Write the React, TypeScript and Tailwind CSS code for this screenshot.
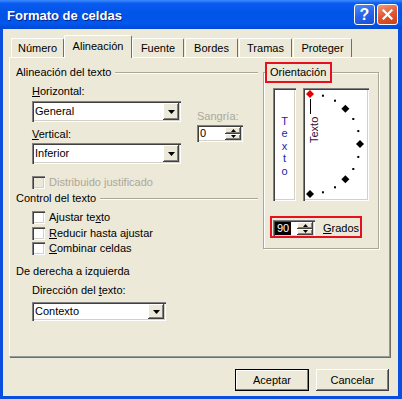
import React from "react";

const sunken =
  "shadow-[inset_1px_1px_0_#808080,inset_2px_2px_0_#404040,inset_-1px_-1px_0_#ffffff,inset_-2px_-2px_0_#d4d0c8]";
const raised =
  "shadow-[inset_-1px_-1px_0_#404040,inset_1px_1px_0_#ffffff,inset_-2px_-2px_0_#808080,inset_2px_2px_0_#ece9d8]";

function Arrow({ up, small }: { up?: boolean; small?: boolean }) {
  const w = small ? 5 : 7;
  const h = small ? 3 : 4;
  return (
    <svg width={w} height={h} viewBox={`0 0 ${w} ${h}`}>
      <polygon points={up ? `${w / 2},0 ${w},${h} 0,${h}` : `0,0 ${w},0 ${w / 2},${h}`} fill="#000" />
    </svg>
  );
}

function Select({ value, className }: { value: string; className: string }) {
  return (
    <div className={`flex bg-white p-[2px] ${sunken} ${className}`}>
      <span className="flex flex-1 items-center pl-[1px]">{value}</span>
      <div className={`flex w-[16px] items-center justify-center bg-[#ece9d8] ${raised}`}>
        <Arrow />
      </div>
    </div>
  );
}

function Spin({ className, children }: { className: string; children: React.ReactNode }) {
  return (
    <div className={`flex bg-white p-[2px] ${sunken} ${className}`}>
      <div className="flex flex-1 items-center">{children}</div>
      <div className="flex w-[16px] flex-col">
        <div className={`flex flex-1 items-center justify-center bg-[#ece9d8] ${raised}`}>
          <Arrow up small />
        </div>
        <div className={`flex flex-1 items-center justify-center bg-[#ece9d8] ${raised}`}>
          <Arrow small />
        </div>
      </div>
    </div>
  );
}

function Check({ children, disabled }: { children: React.ReactNode; disabled?: boolean }) {
  return (
    <div className="flex h-[13px] items-center">
      <div className={`size-[13px] ${disabled ? "bg-[#ece9d8]" : "bg-white"} ${sunken}`} />
      <span className={`ml-[4px] ${disabled ? "text-[#aca899]" : ""}`}>{children}</span>
    </div>
  );
}

function Heading({ label }: { label: string }) {
  return (
    <div className="flex h-[13px] items-center">
      <span>{label}</span>
      <div className="ml-[4px] h-0 flex-1 border-t border-b border-t-[#aca899] border-b-white" />
    </div>
  );
}

const tabs = [
  { name: "Número", w: "ml-[1px] w-[53px]" },
  { name: "Alineación", w: "w-[68px]", active: true },
  { name: "Fuente", w: "w-[52px]" },
  { name: "Bordes", w: "ml-[1px] w-[53px]" },
  { name: "Tramas", w: "ml-[1px] w-[53px]" },
  { name: "Proteger", w: "ml-[1px] w-[59px]" },
];

function Dial() {
  const cx = 7;
  const cy = 56;
  const r = 50;
  const marks = [];
  for (let a = 90; a >= -90; a -= 15) {
    const rad = (a * Math.PI) / 180;
    const x = cx + r * Math.cos(rad);
    const y = cy - r * Math.sin(rad);
    const big = a % 45 === 0;
    marks.push(
      big ? (
        <polygon
          key={a}
          points={`${x},${y - 4} ${x + 4},${y} ${x},${y + 4} ${x - 4},${y}`}
          fill={a === 90 ? "#e00000" : "#000"}
        />
      ) : (
        <rect key={a} x={x - 1} y={y - 1} width="2" height="2" fill="#000" />
      )
    );
  }
  return (
    <svg width="66" height="113" viewBox="0 0 66 113" className="block">
      {marks}
      <line x1="7.5" y1="11" x2="7.5" y2="26" stroke="#000" strokeWidth="1" />
      <text
        transform="translate(15,55) rotate(-90)"
        fontSize="11"
        fontFamily="Liberation Sans, Arial, sans-serif"
        fill="#3a0a30"
      >
        Texto
      </text>
    </svg>
  );
}

export default function App() {
  return (
    <div className="flex h-[399px] w-[402px] flex-col bg-[#0a4ee0] font-['Liberation_Sans',Arial,sans-serif] text-[11px] leading-[13px] text-black">
      {/* title bar */}
      <div className="flex h-[29px] items-center bg-[linear-gradient(180deg,#3d8cff_0%,#0a5bf0_12%,#0054e6_45%,#0058ec_80%,#0348d6_100%)] pl-[7px] pr-[4px]">
        <span className="flex-1 pt-[1px] text-[13px] font-bold text-white [text-shadow:1px_1px_0_#0a1f8a]">
          Formato de celdas
        </span>
        <div className="flex gap-[2px]">
          <div className="flex size-[21px] items-center justify-center rounded-[3px] border border-white bg-[linear-gradient(160deg,#4f8cf6_0%,#2663e8_50%,#1a4fd6_100%)] text-[16px] font-bold leading-none text-white">
            ?
          </div>
          <div className="flex size-[21px] items-center justify-center rounded-[3px] border border-white bg-[linear-gradient(160deg,#f39a7a_0%,#e2582f_50%,#c8401c_100%)]">
            <svg width="11" height="11" viewBox="0 0 11 11">
              <path d="M1.5 1.5 L9.5 9.5 M9.5 1.5 L1.5 9.5" stroke="#fff" strokeWidth="2.2" strokeLinecap="square" />
            </svg>
          </div>
        </div>
      </div>

      {/* body */}
      <div className="mb-[3px] ml-[3px] mr-[4px] flex flex-1 flex-col bg-[#ece9d8]">
        <div className="ml-[7px] mt-[6px] flex h-[22px] items-end">
          {tabs.map((t) =>
            t.active ? (
              <div
                key={t.name}
                className={`relative z-10 -mb-px flex h-[23px] items-center justify-center rounded-t-[2px] border-l border-t border-r border-l-white border-t-white border-r-[#716f64] bg-[#ece9d8] pb-[2px] ${t.w}`}
              >
                {t.name}
              </div>
            ) : (
              <div
                key={t.name}
                className={`flex h-[19px] items-center justify-center rounded-t-[2px] border-l border-t border-r border-l-white border-t-white border-r-[#716f64] bg-[#ece9d8] ${t.w}`}
              >
                {t.name}
              </div>
            )
          )}
        </div>

        {/* panel */}
        <div className="ml-[6px] flex h-[300px] w-[381px] items-start border border-white border-b-[#919b9c] border-r-[#919b9c] pl-[6px] pt-[8px] shadow-[1px_1px_0_#716f64]">
          <div className="flex w-[242px] flex-col">
            <Heading label="Alineación del texto" />
            <div className="flex pl-[16px]">
              <div className="flex w-[149px] flex-col">
                <div className="mt-[6px]">
                  <span className="underline">H</span>orizontal:
                </div>
                <Select value="General" className="mt-[3px] h-[21px]" />
                <div className="mt-[6px]">
                  <span className="underline">V</span>ertical:
                </div>
                <Select value="Inferior" className="mt-[2px] h-[21px]" />
              </div>
              <div className="ml-[16px] flex flex-col">
                <div className="mt-[31px] text-[#aca899]">Sangría:</div>
                <Spin className="mt-[2px] h-[17px] w-[46px]">
                  <span className="pl-[1px]">0</span>
                </Spin>
              </div>
            </div>
            <div className="mt-[12px] pl-[16px]">
              <Check disabled>Distribuido justificado</Check>
            </div>
            <div className="mt-[3px]">
              <Heading label="Control del texto" />
            </div>
            <div className="mt-[6px] flex flex-col gap-[2.5px] pl-[16px]">
              <Check>
                Ajustar te<span className="underline">x</span>to
              </Check>
              <Check>
                <span className="underline">R</span>educir hasta ajustar
              </Check>
              <Check>
                <span className="underline">C</span>ombinar celdas
              </Check>
            </div>
            <div className="mt-[10px]">De derecha a izquierda</div>
            <div className="mt-[6px] pl-[16px]">
              Dirección del <span className="underline">t</span>exto:
            </div>
            <div className="mt-[5px] pl-[16px]">
              <Select value="Contexto" className="h-[19px] w-[134px]" />
            </div>
          </div>

          {/* Orientación group */}
          <div className="relative ml-[5px] mt-[6px] h-[177px] w-[116px] border border-[#aca899] pl-[9px] pt-[15px] shadow-[inset_1px_1px_0_#fff,1px_1px_0_#fff]">
            <div className="absolute -top-[11px] left-[1px] flex h-[21px] w-[67px] items-center border-2 border-[#e8101c] bg-[#ece9d8] pl-[3px]">
              Orientación
            </div>
            <div className="flex gap-[7px]">
              <div className={`flex h-[113px] w-[23px] flex-col items-center justify-center bg-white pt-[3px] leading-[12.6px] text-[#1c1ca8] ${sunken}`}>
                {["T", "e", "x", "t", "o"].map((c, i) => (
                  <span key={i}>{c}</span>
                ))}
              </div>
              <div className={`h-[113px] w-[66px] bg-white ${sunken}`}>
                <Dial />
              </div>
            </div>
            <div className="relative mt-[19px] flex items-center">
              <div className="absolute -left-[3px] -top-[4px] h-[22px] w-[92px] border-2 border-[#e8101c]" />
              <Spin className="h-[17px] w-[42px]">
                <span className="flex h-full items-center bg-black px-[2px] text-white">90</span>
              </Spin>
              <span className="ml-[8px]">
                <span className="underline">G</span>rados
              </span>
            </div>
          </div>
        </div>

        {/* buttons */}
        <div className="mr-[9px] mt-[12px] flex justify-end gap-[7px]">
          <div className="flex h-[22px] w-[74px] items-center justify-center border border-black bg-[#ece9d8] shadow-[inset_-1px_-1px_0_#808080,inset_1px_1px_0_#fff]">
            Aceptar
          </div>
          <div className={`flex h-[22px] w-[73px] items-center justify-center bg-[#ece9d8] ${raised}`}>
            Cancelar
          </div>
        </div>
      </div>
    </div>
  );
}
